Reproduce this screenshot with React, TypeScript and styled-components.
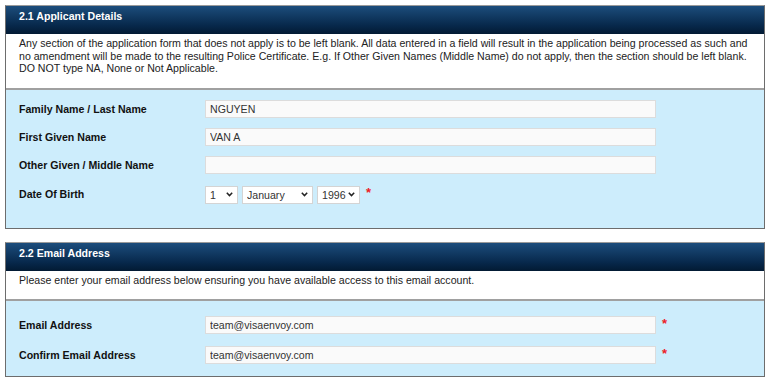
import styled, { createGlobalStyle } from "styled-components";

const Global = createGlobalStyle`
  html, body { margin: 0; padding: 0; background: #fff; }
  body { font-family: "Liberation Sans", Arial, sans-serif; color: #222; }
`;

const Page = styled.div`
  padding: 5px 6px 0 5px;
  display: flex;
  flex-direction: column;
  gap: 13px;
`;

const Panel = styled.section`
  border: 1px solid #6d6d6d;
  border-top-color: #9a9a9a;
  display: flex;
  flex-direction: column;
`;

const Header = styled.div`
  height: 28px;
  padding: 0 13px 8px;
  display: flex;
  align-items: center;
  background: linear-gradient(#1c4d7c, #07284b 70%, #021a33);
  color: #fff;
  font-size: 10.6px;
  font-weight: bold;
  box-sizing: border-box;
`;

const Intro = styled.div`
  background: #fff;
  padding: 3px 13px 13px;
  font-size: 10.6px;
  line-height: 12.5px;
  border-bottom: 2px solid #a0a0a0;
`;

const Fields = styled.div<{ $pad: string; $gap: number }>`
  background: #cdedfc;
  padding: ${(p) => p.$pad};
  display: flex;
  flex-direction: column;
  gap: ${(p) => p.$gap}px;
`;

const Row = styled.div<{ $tall?: boolean }>`
  display: grid;
  grid-template-columns: 186px auto;
  align-items: center;
  height: ${(p) => (p.$tall ? "20px" : "18px")};
`;

const Label = styled.label`
  font-size: 10.6px;
  font-weight: bold;
  color: #111;
`;

const Control = styled.div`
  display: flex;
  align-items: center;
  gap: 4px;
`;

const TextBox = styled.input`
  width: 451px;
  height: 18px;
  box-sizing: border-box;
  border: 1px solid #dcdcdc;
  background: #fafafa;
  font-family: "Liberation Sans", Arial, sans-serif;
  font-size: 10.6px;
  color: #333;
  padding: 0 4px;
  margin: 0;
  outline: none;
`;

const SelectWrap = styled.div<{ $w: number }>`
  position: relative;
  width: ${(p) => p.$w}px;
  height: 18px;
`;

const Select = styled.select`
  appearance: none;
  width: 100%;
  height: 18px;
  box-sizing: border-box;
  border: 1px solid #d4d4d4;
  border-radius: 0;
  background: #fff;
  font-family: "Liberation Sans", Arial, sans-serif;
  font-size: 10.6px;
  color: #333;
  padding: 0 0 0 4px;
  margin: 0;
  outline: none;
`;

const Chevron = styled.svg`
  position: absolute;
  right: 5px;
  top: 7px;
  width: 7px;
  height: 5px;
  pointer-events: none;
`;

const Star = styled.span`
  color: #ee1c25;
  font-size: 13px;
  font-weight: bold;
  margin-left: 2px;
  line-height: 1;
  align-self: flex-start;
  margin-top: 1px;
`;

const months = [
  "January", "February", "March", "April", "May", "June",
  "July", "August", "September", "October", "November", "December",
];

const Dropdown = ({ w, value, options }: { w: number; value: string; options: string[] }) => (
  <SelectWrap $w={w}>
    <Select defaultValue={value}>
      {options.map((o) => (
        <option key={o}>{o}</option>
      ))}
    </Select>
    <Chevron viewBox="0 0 7 5">
      <path d="M0.8 0.8 L3.5 3.6 L6.2 0.8" fill="none" stroke="#222" strokeWidth="1.5" />
    </Chevron>
  </SelectWrap>
);

export default function App() {
  return (
    <Page>
      <Global />
      <Panel>
        <Header>2.1 Applicant Details</Header>
        <Intro>
          Any section of the application form that does not apply is to be left blank. All data entered in a field will
          result in the application being processed as such and no amendment will be made to the resulting Police
          Certificate. E.g. If Other Given Names (Middle Name) do not apply, then the section should be left blank. DO
          NOT type NA, None or Not Applicable.
        </Intro>
        <Fields $pad="10px 13px 24px" $gap={10}>
          <Row>
            <Label>Family Name / Last Name</Label>
            <Control>
              <TextBox defaultValue="NGUYEN" />
            </Control>
          </Row>
          <Row>
            <Label>First Given Name</Label>
            <Control>
              <TextBox defaultValue="VAN A" />
            </Control>
          </Row>
          <Row>
            <Label>Other Given / Middle Name</Label>
            <Control>
              <TextBox defaultValue="" />
            </Control>
          </Row>
          <Row $tall>
            <Label>Date Of Birth</Label>
            <Control>
              <Dropdown w={33} value="1" options={Array.from({ length: 31 }, (_, i) => String(i + 1))} />
              <Dropdown w={71} value="January" options={months} />
              <Dropdown w={43} value="1996" options={Array.from({ length: 80 }, (_, i) => String(2010 - i))} />
              <Star>*</Star>
            </Control>
          </Row>
        </Fields>
      </Panel>
      <Panel>
        <Header>2.2 Email Address</Header>
        <Intro>Please enter your email address below ensuring you have available access to this email account.</Intro>
        <Fields $pad="15px 13px 12px" $gap={12}>
          <Row>
            <Label>Email Address</Label>
            <Control>
              <TextBox defaultValue="team@visaenvoy.com" />
              <Star>*</Star>
            </Control>
          </Row>
          <Row>
            <Label>Confirm Email Address</Label>
            <Control>
              <TextBox defaultValue="team@visaenvoy.com" />
              <Star>*</Star>
            </Control>
          </Row>
        </Fields>
      </Panel>
    </Page>
  );
}
